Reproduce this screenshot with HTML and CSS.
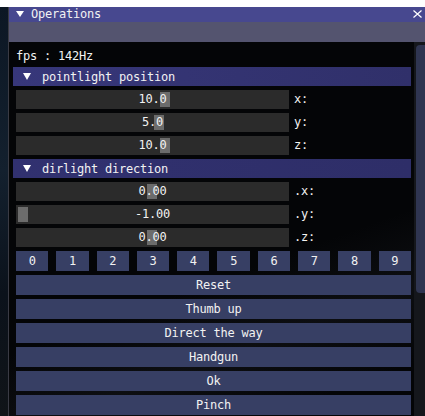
FILE: index.html
```html
<!DOCTYPE html>
<html>
<head>
<meta charset="utf-8">
<link rel="stylesheet" href="styles.css">
</head>
<body>
<div class="topgap"></div>
<div class="main">
  <div class="scene"></div>
  <div class="window">
    <div class="titlebar">
      <svg class="tri-title" width="8" height="6" viewBox="0 0 8 6"><polygon points="0,0 8,0 4,6" fill="#ffffff"/></svg>
      <span class="title-text">Operations</span>
      <svg class="close" width="9" height="8" viewBox="0 0 9 8"><path d="M0.5 0.5 L8.5 7.5 M8.5 0.5 L0.5 7.5" stroke="#ffffff" stroke-width="1.2" fill="none"/></svg>
    </div>
    <div class="menubar"></div>
    <div class="body">
      <div class="content">
        <div class="text-line">fps : 142Hz</div>
        <div class="header">
          <svg class="tri" width="8" height="7" viewBox="0 0 8 7"><polygon points="0,0 8,0 4,7" fill="#ffffff"/></svg>
          <span>pointlight position</span>
        </div>
        <div class="slider-row">
          <div class="slider"><div class="grab" style="left:144px"></div><span class="val">10.0</span></div>
          <span class="label">x:</span>
        </div>
        <div class="slider-row">
          <div class="slider"><div class="grab" style="left:138px"></div><span class="val">5.0</span></div>
          <span class="label">y:</span>
        </div>
        <div class="slider-row">
          <div class="slider"><div class="grab" style="left:144px"></div><span class="val">10.0</span></div>
          <span class="label">z:</span>
        </div>
        <div class="header header2">
          <svg class="tri" width="8" height="7" viewBox="0 0 8 7"><polygon points="0,0 8,0 4,7" fill="#ffffff"/></svg>
          <span>dirlight direction</span>
        </div>
        <div class="slider-row">
          <div class="slider"><div class="grab" style="left:131px"></div><span class="val">0.00</span></div>
          <span class="label">.x:</span>
        </div>
        <div class="slider-row">
          <div class="slider"><div class="grab" style="left:2px"></div><span class="val">-1.00</span></div>
          <span class="label">.y:</span>
        </div>
        <div class="slider-row">
          <div class="slider"><div class="grab" style="left:131px"></div><span class="val">0.00</span></div>
          <span class="label">.z:</span>
        </div>
        <div class="num-row">
          <div class="btn">0</div><div class="btn">1</div><div class="btn">2</div><div class="btn">3</div><div class="btn">4</div>
          <div class="btn">5</div><div class="btn">6</div><div class="btn">7</div><div class="btn">8</div><div class="btn">9</div>
        </div>
        <div class="btn wide">Reset</div>
        <div class="btn wide">Thumb up</div>
        <div class="btn wide">Direct the way</div>
        <div class="btn wide">Handgun</div>
        <div class="btn wide">Ok</div>
        <div class="btn wide">Pinch</div>
      </div>
      <div class="scrollbar"><div class="scroll-grab"></div></div>
    </div>
  </div>
</div>
</body>
</html>
```
FILE: styles.css
```css
html, body {
  margin: 0;
  padding: 0;
}
body {
  width: 425px;
  height: 416px;
  overflow: hidden;
  background: #ffffff;
  font-family: "DejaVu Sans Mono", "Liberation Mono", monospace;
  font-size: 12px;
  letter-spacing: -0.22px;
  color: #f2f2f2;
}
.topgap {
  height: 7px;
  background: #ffffff;
}
.main {
  display: flex;
  height: 409px;
}
.scene {
  width: 8px;
  background: linear-gradient(180deg, #0c1724 0%, #13202e 40%, #0b121b 70%, #101418 100%);
}
.window {
  flex: 1;
  display: flex;
  flex-direction: column;
  border-left: 1px solid #3a3b44;
  background: #040507;
  min-width: 0;
}
.titlebar {
  height: 15px;
  background: #47488f;
  display: flex;
  align-items: center;
  padding-left: 7px;
  padding-right: 3px;
}
.tri-title {
  margin-right: 7px;
  margin-top: -1px;
}
.title-text {
  flex: 1;
  line-height: 15px;
  margin-top: -1px;
}
.close {
  margin-top: -1px;
}
.menubar {
  height: 20px;
  background: #54546f;
}
.body {
  flex: 1;
  display: flex;
  min-height: 0;
}
.content {
  flex: 1;
  display: flex;
  flex-direction: column;
  gap: 4px;
  padding: 8px 3px 0 7px;
  background:
    linear-gradient(160deg, transparent 0%, transparent 60%, rgba(90,95,110,0.10) 75%, transparent 90%),
    #040507;
}
.text-line {
  height: 13px;
  line-height: 13px;
}
.header {
  height: 19px;
  margin-left: -3px;
  background: linear-gradient(90deg, #37377a 0%, #30306a 100%);
  display: flex;
  align-items: center;
  padding-left: 10px;
}
.header2 {
  background: linear-gradient(90deg, #313170 0%, #2e2e68 100%);
}
.tri {
  margin-right: 11px;
}
.slider-row {
  display: flex;
  height: 19px;
  align-items: center;
}
.slider {
  position: relative;
  width: 273px;
  height: 19px;
  background: #2b2b2b;
  display: flex;
  align-items: center;
  justify-content: center;
  flex-shrink: 0;
}
.grab {
  position: absolute;
  top: 2px;
  bottom: 2px;
  width: 10px;
  background: #6c6c6c;
}
.val {
  position: relative;
  line-height: 19px;
}
.label {
  margin-left: 5px;
  line-height: 19px;
}
.num-row {
  display: flex;
  gap: 8px;
  height: 20px;
}
.btn {
  flex: 1;
  height: 20px;
  line-height: 20px;
  text-align: center;
  background: #373f64;
}
.wide {
  flex: none;
}
.scrollbar {
  width: 11px;
  background: #15171c;
  padding-top: 3px;
  padding-left: 2px;
  box-sizing: border-box;
}
.scroll-grab {
  height: 248px;
  background: #2f3551;
  border-radius: 4px 0 0 4px;
}
```
